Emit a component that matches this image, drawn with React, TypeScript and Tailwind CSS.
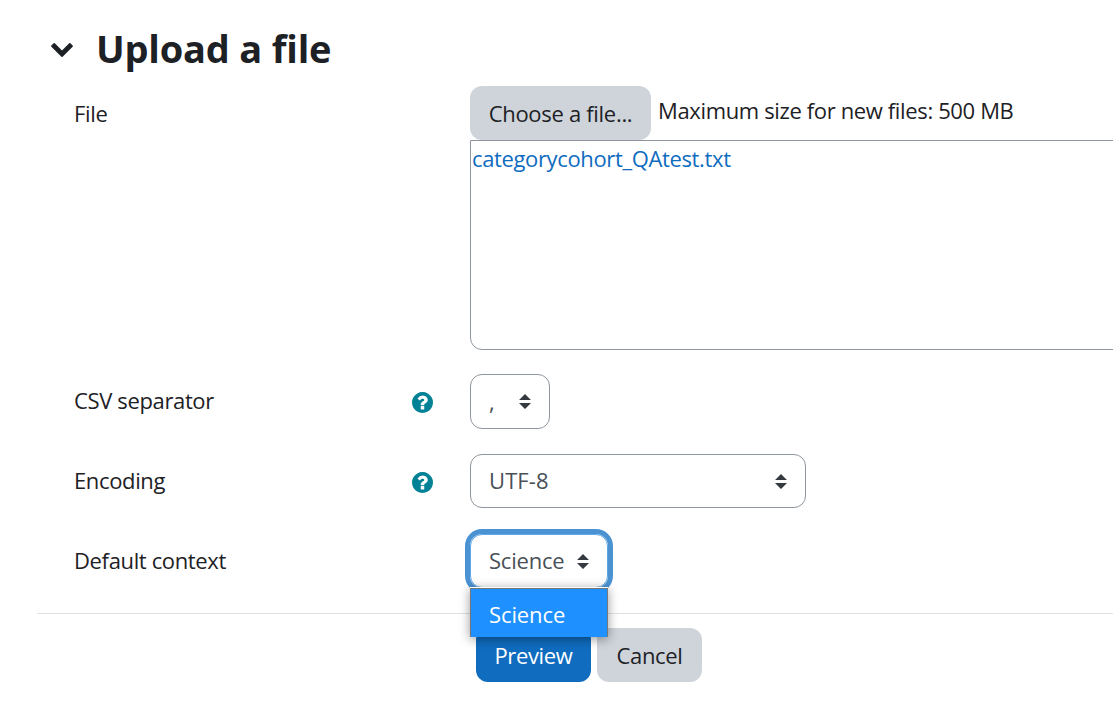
import type { ReactNode } from "react";

const HelpIcon = () => (
  <svg viewBox="128 128 1536 1536" className="mt-[2px] block h-[21px] w-[21px] fill-[#008196]">
    <path d="M1024 1376v-192q0-14-9-23t-23-9h-192q-14 0-23 9t-9 23v192q0 14 9 23t23 9h192q14 0 23-9t9-23zm256-672q0-88-55.5-163t-138.5-116-170-41q-243 0-371 213-15 24 8 42l132 100q7 6 19 6 16 0 25-12 53-68 86-92 34-24 86-24 48 0 85.5 26t37.5 59q0 38-20 61t-68 45q-63 28-115.5 86.5t-52.5 125.5v36q0 14 9 23t23 9h192q14 0 23-9t9-23q0-19 21.5-49.5t54.5-49.5q32-18 49-28.5t46-35 44.5-48 28-60.5 12.5-81zm384 192q0 209-103 385.5t-279.5 279.5-385.5 103-385.5-103-279.5-279.5-103-385.5 103-385.5 279.5-279.5 385.5-103 385.5 103 279.5 279.5 103 385.5z" />
  </svg>
);

const ChevronIcon = () => (
  <svg viewBox="90 533 1612 1035" className="block h-[14px] w-[22px] fill-[#1d2125]">
    <path d="M1683 808l-742 741q-19 19-45 19t-45-19l-742-741q-19-19-19-45.5t19-45.5l166-165q19-19 45-19t45 19l531 531 531-531q19-19 45-19t45 19l166 165q19 19 19 45.5t-19 45.5z" />
  </svg>
);

const SortIcon = () => (
  <svg viewBox="0 0 4 5" className="mt-px block h-[15px] w-[12px] fill-[#343a40]">
    <path d="M2 0L0 2h4zm0 5L0 3h4z" />
  </svg>
);

type RowProps = { label: string; help?: boolean; children: ReactNode };

const Row = ({ label, help, children }: RowProps) => (
  <div className="flex h-[54px] items-center pl-[74px]">
    <div className="w-[338px] pb-[2px]">{label}</div>
    <div className="w-[58px]">{help && <HelpIcon />}</div>
    {children}
  </div>
);

export default function App() {
  return (
    <div className="h-[707px] w-full overflow-hidden bg-white font-['Open_Sans','Noto_Sans',sans-serif] text-[22px] leading-[34px] tracking-[-0.36px] text-[#1d2125]">
      <div className="flex h-[86px] items-center gap-[23px] pl-[51px] pt-[13px]">
        <ChevronIcon />
        <h3 className="-mt-[4px] text-[38px] font-bold leading-[46px] tracking-[-0.2px]">Upload a file</h3>
      </div>

      <div className="flex pl-[74px]">
        <div className="w-[396px] shrink-0 pt-[10px]">File</div>
        <div className="w-[700px] shrink-0">
          <div className="flex gap-[7px]">
            <button type="button" className="h-[54px] w-[181px] rounded-[12px] bg-[#ced4da] tracking-[-0.3px]">
              Choose a file...
            </button>
            <span className="pt-[7px]">Maximum size for new files: 500 MB</span>
          </div>
          <div className="h-[210px] rounded-bl-[12px] border border-[#8f959e] pl-px">
            <a href="#" className="text-[#0f6cbf]">categorycohort_QAtest.txt</a>
          </div>
        </div>
      </div>

      <div className="mt-6 flex flex-col gap-[26px]">
        <Row label="CSV separator" help>
          <div className="flex h-[55px] w-[80px] items-center justify-between rounded-[12px] border border-[#8f959e] px-[18px] text-[#495057]">
            <span>,</span>
            <SortIcon />
          </div>
        </Row>
        <Row label="Encoding" help>
          <div className="flex h-[54px] w-[336px] items-center justify-between rounded-[12px] border border-[#8f959e] px-[18px] text-[#495057]">
            <span className="pb-[2px] tracking-[0.1px]">UTF-8</span>
            <SortIcon />
          </div>
        </Row>
        <Row label="Default context">
          <div className="relative flex h-[54px] w-[138px] items-center justify-between rounded-[12px] border border-[#5ea6e4] px-[18px] text-[#495057] shadow-[0_0_0_5px_#4b92d2]">
            <span className="pb-[2px] tracking-[-0.2px]">Science</span>
            <SortIcon />
            <div className="absolute left-[-1px] top-[52px] z-10 h-[50px] w-[138px] border-t border-white shadow-[0_2px_10px_rgba(0,0,0,0.4)]">
              <div className="flex h-[49px] items-center border border-b-0 border-[#767676] bg-[#1e90ff] pl-[18px] pt-px tracking-[-0.1px] text-white">
                Science
              </div>
            </div>
          </div>
        </Row>
      </div>

      <hr className="ml-[37px] mt-[25px] border-t border-[#dee2e6]" />

      <div className="flex gap-[6px] pl-[476px] pt-[14px]">
        <button type="button" className="h-[54px] w-[115px] rounded-[12px] bg-[#0f6cbf] text-white">
          Preview
        </button>
        <button type="button" className="h-[54px] w-[105px] rounded-[12px] bg-[#ced4da]">
          Cancel
        </button>
      </div>
    </div>
  );
}
